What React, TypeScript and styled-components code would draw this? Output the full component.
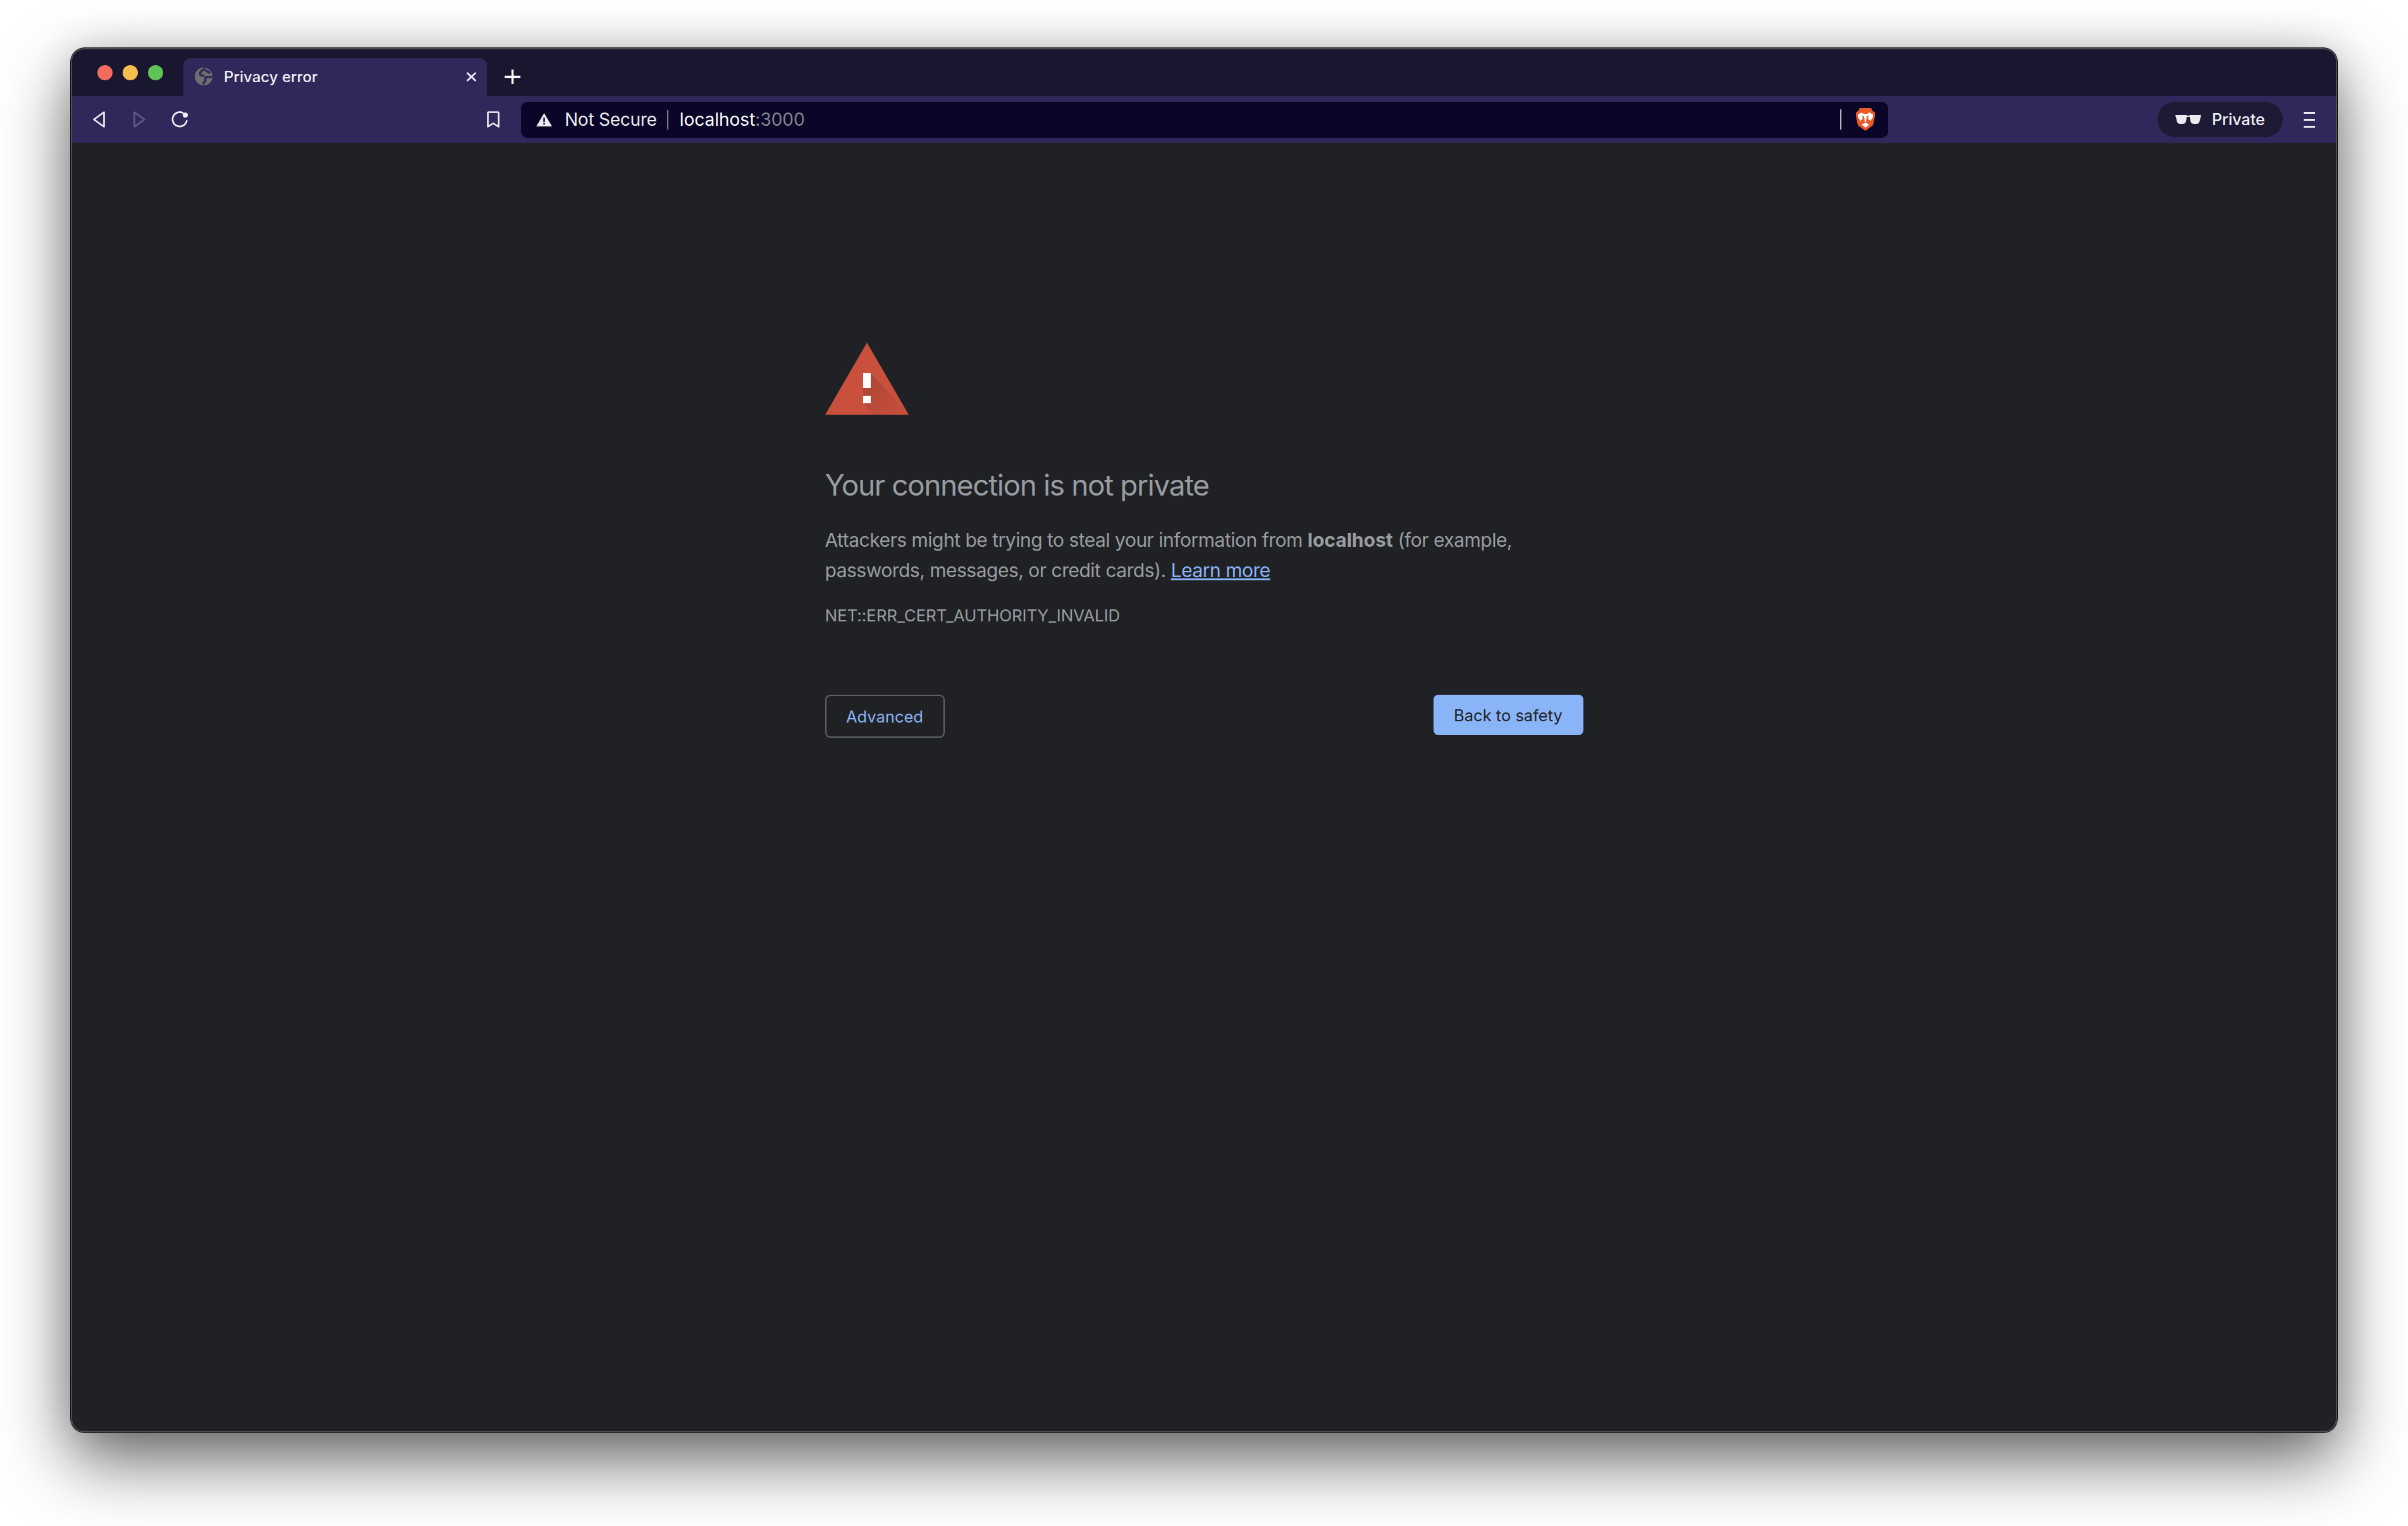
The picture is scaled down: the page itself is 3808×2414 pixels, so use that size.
import * as React from "react";
import styled, { createGlobalStyle } from "styled-components";

const GlobalStyle = createGlobalStyle`
  html, body {
    margin: 0;
    padding: 0;
    background: #ffffff;
  }
  * {
    box-sizing: border-box;
  }
`;

const SDesktop = styled.div`
  width: 3808px;
  height: 2414px;
  padding: 76px 112px 148px 112px;
  background: #ffffff;
  overflow: hidden;
`;

const SWindow = styled.div`
  width: 100%;
  height: 100%;
  display: flex;
  flex-direction: column;
  border: 2px solid #4e4f52;
  border-radius: 22px;
  overflow: hidden;
  background: #202125;
  box-shadow: 0 0 0 1px #111114, 0 44px 110px rgba(0, 0, 0, 0.6), 0 0 60px rgba(0, 0, 0, 0.12);
`;

const STabStrip = styled.div`
  height: 74px;
  flex: none;
  display: flex;
  align-items: flex-end;
  padding-left: 40px;
  background: #191730;
`;

const SLights = styled.div`
  display: flex;
  gap: 16px;
  align-self: flex-start;
  margin: 25px 32px 0 0;
`;

const SLight = styled.span<{ $color: string }>`
  width: 24px;
  height: 24px;
  border-radius: 50%;
  background: ${({ $color }) => $color};
`;

const STab = styled.div`
  width: 480px;
  height: 60px;
  display: flex;
  align-items: center;
  padding: 0 16px 2px 18px;
  border-radius: 12px 12px 0 0;
  background: #30285a;
  color: #f1f0f5;
  font: 500 24px "Inter", sans-serif;
`;

const STabTitle = styled.span`
  flex: 1;
  margin-left: 18px;
`;

const SNewTab = styled.div`
  width: 25px;
  height: 60px;
  margin-left: 28px;
  display: flex;
  align-items: center;
  padding-bottom: 2px;
`;

const SToolbar = styled.div`
  height: 74px;
  flex: none;
  display: flex;
  align-items: center;
  background: #30285a;
`;

const SNavGroup = styled.div`
  width: 710px;
  flex: none;
  display: flex;
  align-items: center;
  padding-left: 33px;
`;

const SNavIcon = styled.svg<{ $gap?: number }>`
  flex: none;
  margin-left: ${({ $gap }) => $gap || 0}px;
`;

const SUrlBar = styled.div`
  width: 2162px;
  height: 57px;
  flex: none;
  display: flex;
  align-items: center;
  padding: 0 20px 0 24px;
  border-radius: 10px;
  background: #0a0627;
  font: 400 28px "Inter", sans-serif;
  letter-spacing: -0.25px;
  color: #ecebef;
`;

const SNotSecure = styled.span`
  margin-left: 20px;
`;

const SUrlDivider = styled.span`
  width: 2px;
  height: 31px;
  background: #77768a;
  flex: none;
  margin: 0 18px 0 16px;
`;

const SHost = styled.span`
  flex: 1;
  color: #ffffff;
  letter-spacing: 0;
`;

const SPort = styled.span`
  color: #85848f;
`;

const SShieldDivider = styled.span`
  width: 2px;
  height: 32px;
  background: #b5b4be;
  flex: none;
  margin-right: 22px;
`;

const SToolbarRight = styled.div`
  flex: 1;
  display: flex;
  align-items: center;
  justify-content: flex-end;
  padding-right: 33px;
`;

const SPrivatePill = styled.div`
  width: 198px;
  height: 56px;
  display: flex;
  align-items: center;
  gap: 17px;
  padding-left: 28px;
  border-radius: 28px;
  background: #1c1a35;
  color: #f1f0f5;
  font: 500 25px "Inter", sans-serif;
`;

const SMenuButton = styled.div`
  width: 18px;
  margin-left: 33px;
  display: flex;
  flex-direction: column;
  gap: 8px;
`;

const SMenuLine = styled.span`
  height: 3px;
  background: #ecebef;
`;

const SContent = styled.main`
  flex: 1;
  display: flex;
  justify-content: center;
  padding-top: 316px;
`;

const SColumn = styled.div`
  width: 1199px;
  font-family: "Inter", sans-serif;
`;

const SWarning = styled.svg`
  display: block;
`;

const SHeading = styled.h1`
  margin: 81px 0 0;
  font-size: 46px;
  line-height: 60px;
  font-weight: 400;
  letter-spacing: -1.4px;
  color: #999da1;
`;

const SParagraph = styled.p`
  margin: 33px 0 0;
  width: 1120px;
  font-size: 30px;
  line-height: 48px;
  letter-spacing: -0.5px;
  color: #999da1;
`;

const SHostName = styled.strong`
  font-weight: 700;
  letter-spacing: 0;
`;

const SLink = styled.a`
  color: #8ab4f8;
  text-decoration: underline;
`;

const SErrorCode = styled.div`
  margin-top: 30px;
  font-size: 26px;
  line-height: 36px;
  letter-spacing: -0.1px;
  color: #999da1;
`;

const SActions = styled.div`
  margin-top: 107px;
  display: flex;
  justify-content: space-between;
  align-items: flex-start;
`;

const SButton = styled.button<{ $primary?: boolean }>`
  height: ${({ $primary }) => ($primary ? 64 : 68)}px;
  width: ${({ $primary }) => ($primary ? 237 : 189)}px;
  padding: 0;
  border: ${({ $primary }) => ($primary ? "none" : "2px solid #5f6368")};
  border-radius: 8px;
  background: ${({ $primary }) => ($primary ? "#8ab4f8" : "transparent")};
  color: ${({ $primary }) => ($primary ? "#202124" : "#8ab4f8")};
  font: 400 25.500px "Inter", sans-serif;
`;

function GlobeIcon() {
  return (
    <svg width="28" height="28" viewBox="0 0 28 28">
      <circle cx="14" cy="14" r="14" fill="#6f6f72" />
      <g fill="none" stroke="#30285a" strokeWidth="3.400" strokeLinecap="round">
        <path d="M16 2.500C12 3.500 7.500 7 8.500 10.500c.7 2.300 3.500 2.800 5.500 2.300" />
        <path d="M26 14.500c-3 1.200-6-.8-8.500 1-2 1.500 0 4-1 6-.5 1.200-2 2-3 3.500" />
        <path d="M18 5.500c2 0 4 1 5 2.500" />
      </g>
    </svg>
  );
}

function CloseIcon() {
  return (
    <svg width="17" height="15" viewBox="0 0 17 15">
      <path d="M1.500 1l14 13M15.500 1l-14 13" stroke="#f1f0f5" strokeWidth="2.600" />
    </svg>
  );
}

function PlusIcon() {
  return (
    <svg width="25" height="23" viewBox="0 0 25 23">
      <path d="M12.500 0v23M0 11.500h25" stroke="#ffffff" strokeWidth="3.400" />
    </svg>
  );
}

function LionIcon() {
  return (
    <svg width="32" height="36" viewBox="0 0 32 36">
      <path d="M7 0h18l2 4 4 3v6l-3 14-12 9-12-9L1 13V7l4-3z" fill="#ea5a28" />
      <path d="M4 10l6-3 3 2h6l3-2 6 3v4l-4 6-3-2-1-3 2-3-4 1-1 9h-2l-1-9-4-1 2 3-1 3-3 2-4-6z" fill="#ffffff" />
      <path d="M10 26l6-3 6 3-6 5z" fill="#ffffff" />
    </svg>
  );
}

function GlassesIcon() {
  return (
    <svg width="41" height="14" viewBox="0 0 41 14">
      <path d="M0 0h18.500v.5l-1.500 9c-.5 3-2.500 4.500-6 4.500H8c-3 0-5-1.500-5.500-4.500zM41 0H22.500v.5l1.500 9c.5 3 2.500 4.500 6 4.500h3c3 0 5-1.500 5.500-4.500z" fill="#ecebef" />
      <path d="M17 1h7v2h-7z" fill="#ecebef" />
    </svg>
  );
}

export default function App() {
  return (
    <SDesktop>
      <GlobalStyle />
      <SWindow>
        <STabStrip>
          <SLights>
            <SLight $color="#f26d60" />
            <SLight $color="#f6bd4f" />
            <SLight $color="#5fc454" />
          </SLights>
          <STab>
            <GlobeIcon />
            <STabTitle>Privacy error</STabTitle>
            <CloseIcon />
          </STab>
          <SNewTab>
            <PlusIcon />
          </SNewTab>
        </STabStrip>
        <SToolbar>
          <SNavGroup>
            <SNavIcon width="19" height="26" viewBox="0 0 19 26">
              <path d="M17.500 1.500v23L1.500 13z" fill="none" stroke="#f1f0f5" strokeWidth="2.600" strokeLinejoin="round" />
            </SNavIcon>
            <SNavIcon $gap={45} width="19" height="26" viewBox="0 0 19 26">
              <path d="M1.500 1.500v23L17.500 13z" fill="none" stroke="#625a85" strokeWidth="2.600" strokeLinejoin="round" />
            </SNavIcon>
            <SNavIcon $gap={41} width="27" height="26" viewBox="0 0 27 26">
              <path d="M18 2.500A11.300 11.300 0 1 0 24.300 15" fill="none" stroke="#f1f0f5" strokeWidth="2.600" strokeLinecap="round" />
              <circle cx="22" cy="6" r="4" fill="#f1f0f5" />
            </SNavIcon>
            <SNavIcon $gap={472} width="20" height="26" viewBox="0 0 20 26">
              <path d="M1.500 2.500a1 1 0 0 1 1-1h15a1 1 0 0 1 1 1v22L10 19l-8.500 5.500z" fill="none" stroke="#f1f0f5" strokeWidth="2.600" strokeLinejoin="round" />
            </SNavIcon>
          </SNavGroup>
          <SUrlBar>
            <svg width="25" height="21" viewBox="0 0 25 21">
              <path d="M12.500 0L25 21H0z" fill="#ecebef" />
              <path d="M11.300 7h2.400v7h-2.400zM11.300 15.500h2.400v2.400h-2.400z" fill="#0a0627" />
            </svg>
            <SNotSecure>Not Secure</SNotSecure>
            <SUrlDivider />
            <SHost>
              localhost<SPort>:3000</SPort>
            </SHost>
            <SShieldDivider />
            <LionIcon />
          </SUrlBar>
          <SToolbarRight>
            <SPrivatePill>
              <GlassesIcon />
              Private
            </SPrivatePill>
            <SMenuButton>
              <SMenuLine />
              <SMenuLine />
              <SMenuLine />
            </SMenuButton>
          </SToolbarRight>
        </SToolbar>
        <SContent>
          <SColumn>
            <SWarning width="132" height="114" viewBox="0 0 132 114">
              <defs>
                <linearGradient id="fold" x1="0" y1="0" x2="1" y2="1">
                  <stop offset="0" stopColor="#000000" stopOpacity="0.16" />
                  <stop offset="1" stopColor="#000000" stopOpacity="0" />
                </linearGradient>
              </defs>
              <path d="M66 0l66 114H0z" fill="#c9503d" />
              <path d="M72 48L132 114H78L60 96V60z" fill="url(#fold)" />
              <path d="M60 48h12v24H60zM60 84h12v12H60z" fill="#ffffff" />
            </SWarning>
            <SHeading>Your connection is not private</SHeading>
            <SParagraph>
              Attackers might be trying to steal your information from <SHostName>localhost</SHostName> (for example, passwords, messages, or credit cards). <SLink>Learn more</SLink>
            </SParagraph>
            <SErrorCode>NET::ERR_CERT_AUTHORITY_INVALID</SErrorCode>
            <SActions>
              <SButton>Advanced</SButton>
              <SButton $primary>Back to safety</SButton>
            </SActions>
          </SColumn>
        </SContent>
      </SWindow>
    </SDesktop>
  );
}
